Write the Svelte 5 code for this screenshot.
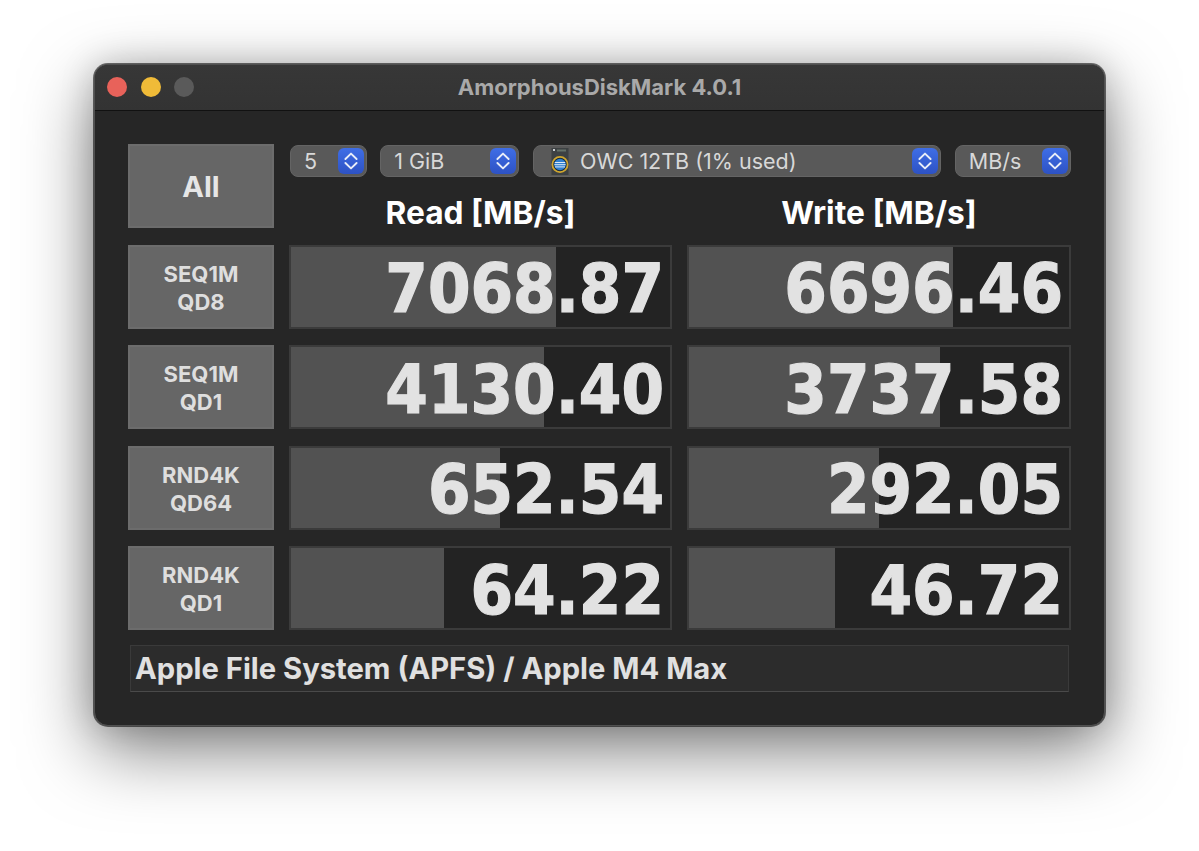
<script>
	const selects = [
		{ label: '5', cls: 'sel-count' },
		{ label: '1 GiB', cls: 'sel-size' },
		{ label: 'OWC 12TB (1% used)', cls: 'sel-disk', icon: true },
		{ label: 'MB/s', cls: 'sel-unit' }
	];

	const rows = [
		{ a: 'SEQ1M', b: 'QD8', read: '7068.87', readBar: 265, write: '6696.46', writeBar: 264 },
		{ a: 'SEQ1M', b: 'QD1', read: '4130.40', readBar: 253, write: '3737.58', writeBar: 251 },
		{ a: 'RND4K', b: 'QD64', read: '652.54', readBar: 209, write: '292.05', writeBar: 190 },
		{ a: 'RND4K', b: 'QD1', read: '64.22', readBar: 153, write: '46.72', writeBar: 146 }
	];
</script>

<div class="page">
	<div class="window">
		<div class="titlebar">
			<div class="lights">
				<span class="light red"></span>
				<span class="light yellow"></span>
				<span class="light off"></span>
			</div>
			<div class="title">AmorphousDiskMark 4.0.1</div>
		</div>

		<div class="body">
			<div class="top">
				<button class="tile all">All</button>
				<div class="controls">
					<div class="selects">
						{#each selects as s}
							<div class="select {s.cls}">
								{#if s.icon}
									<svg class="disk" viewBox="0 0 18 27" width="18" height="27">
										<rect x="0.5" y="0" width="17" height="27" fill="#3d4143" />
										<rect x="2" y="1" width="2" height="2" fill="#c9ccd0" />
										<rect x="6" y="1.5" width="9" height="2" fill="#66726a" />
										<circle cx="9" cy="16.5" r="7.6" fill="#14283f" stroke="#cfa62f" stroke-width="1.8" />
										<circle cx="9" cy="16.5" r="5.8" fill="#2f7fd0" />
										<path d="M3.8 14.5h10.4M3.4 16.7h11.2M4 18.9h10" stroke="#dbe9f5" stroke-width="1" />
									</svg>
								{/if}
								<span class="sel-label">{s.label}</span>
								<span class="stepper">
									<svg viewBox="0 0 14 20" width="14" height="20">
										<path d="M1.4 8 7 2.6 12.6 8M1.4 12 7 17.4 12.6 12" fill="none" stroke="#e8edf8" stroke-width="1.9" stroke-linecap="round" stroke-linejoin="round" />
									</svg>
								</span>
							</div>
						{/each}
					</div>
					<div class="heads">
						<div class="head read">Read [MB/s]</div>
						<div class="head">Write [MB/s]</div>
					</div>
				</div>
			</div>

			{#each rows as r}
				<div class="row">
					<button class="tile test">{r.a}<br />{r.b}</button>
					<div class="meter read">
						<div class="bar" style="width: {r.readBar}px"></div>
						<span class="value">{r.read}</span>
					</div>
					<div class="meter">
						<div class="bar" style="width: {r.writeBar}px"></div>
						<span class="value">{r.write}</span>
					</div>
				</div>
			{/each}

			<div class="status">Apple File System (APFS) / Apple M4 Max</div>
		</div>
	</div>
</div>

<style>
	:global(body) {
		background: #fff;
	}

	.page {
		height: 851px;
		box-sizing: border-box;
		padding: 64px 94px 0;
		overflow: hidden;
		font-family: Inter, "Liberation Sans", sans-serif;
	}

	.window {
		width: 1011px;
		height: 662px;
		box-sizing: border-box;
		background: #262626;
		border-radius: 14px;
		border: 1px solid #505050;
		box-shadow: 0 0 0 1px rgba(0, 0, 0, 0.55), 0 24px 70px rgba(0, 0, 0, 0.5), 0 0 34px rgba(0, 0, 0, 0.18);
		overflow: hidden;
	}

	.titlebar {
		height: 45px;
		box-sizing: content-box;
		background: linear-gradient(#373737, #333);
		border-bottom: 1px solid #111;
		display: flex;
		align-items: center;
		position: relative;
	}

	.lights {
		display: flex;
		gap: 13.5px;
		padding: 0 0 1px 12px;
	}

	.light {
		width: 20px;
		height: 20px;
		border-radius: 50%;
	}

	.red { background: #e8625a; }
	.yellow { background: #f0bb38; }
	.off { background: #5a5a5a; }

	.title {
		position: absolute;
		left: 0;
		right: 0;
		padding-bottom: 1px;
		text-align: center;
		font-size: 22px;
		font-weight: 700;
		color: #a9a9a9;
	}

	.body {
		padding: 33px 33px 0;
	}

	.top {
		display: flex;
		gap: 15px;
		height: 84px;
	}

	.tile {
		width: 146px;
		flex: none;
		padding: 0;
		box-sizing: border-box;
		background: #666;
		border: 2px solid #6c6c6c;
		border-radius: 0;
		color: #e6e6e6;
		font-family: inherit;
		font-weight: 700;
		text-align: center;
	}

	.all {
		height: 84px;
		font-size: 29px;
	}

	.test {
		height: 84px;
		padding-top: 2px;
		font-size: 22px;
		line-height: 28px;
		color: #dedede;
	}

	.controls {
		flex: 1;
		min-width: 0;
	}

	.selects {
		display: flex;
		gap: 13.75px;
		height: 33px;
		margin: 1px 0 0 1px;
	}

	.select {
		box-sizing: border-box;
		height: 32px;
		background: #595959;
		border-radius: 8px;
		border: 1px solid #646464;
		display: flex;
		align-items: center;
		position: relative;
		color: #d8d8d8;
		font-size: 21.5px;
	}

	.sel-count { width: 76.5px; }
	.sel-size { width: 139px; }
	.sel-disk { width: 408px; }
	.sel-unit { width: 116.25px; }

	.sel-label {
		padding-left: 13px;
	}

	.sel-disk .sel-label {
		padding-left: 11px;
	}

	.disk {
		margin-left: 17px;
	}

	.stepper {
		position: absolute;
		right: 2px;
		top: 2px;
		width: 26px;
		height: 26px;
		border-radius: 6px;
		background: linear-gradient(#3f6ee6, #2d52c4);
		display: flex;
		align-items: center;
		justify-content: center;
	}

	.heads {
		display: flex;
		gap: 15px;
	}

	.head {
		flex: 1;
		text-align: center;
		font-size: 31.7px;
		font-weight: 700;
		color: #fff;
		line-height: 40px;
		margin-top: 15px;
	}

	.head.read {
		flex: none;
		width: 383px;
	}

	.row {
		display: flex;
		gap: 15px;
		height: 84px;
		margin-top: 16.5px;
	}

	.meter {
		flex: 1;
		box-sizing: border-box;
		position: relative;
		background: #232323;
		border: 2px solid #3b3b3b;
		display: flex;
		align-items: center;
		justify-content: flex-end;
		padding: 4px 6px 0 0;
	}

	.meter.read {
		flex: none;
		width: 383px;
	}

	.bar {
		position: absolute;
		left: 0;
		top: 0;
		bottom: 0;
		background: #525252;
	}

	.value {
		position: relative;
		font-family: "DejaVu Sans", sans-serif;
		font-stretch: condensed;
		font-weight: 700;
		font-size: 68px;
		color: #e2e2e2;
		-webkit-text-stroke: 1.2px #e2e2e2;
	}

	.status {
		box-sizing: border-box;
		height: 47px;
		margin: 15px 2px 0;
		padding-left: 4px;
		background: #2c2c2c;
		border: 1px solid #3a3a3a;
		border-bottom-color: #4a4a4a;
		display: flex;
		align-items: center;
		font-size: 29.2px;
		font-weight: 700;
		color: #e0e0e0;
	}
</style>
